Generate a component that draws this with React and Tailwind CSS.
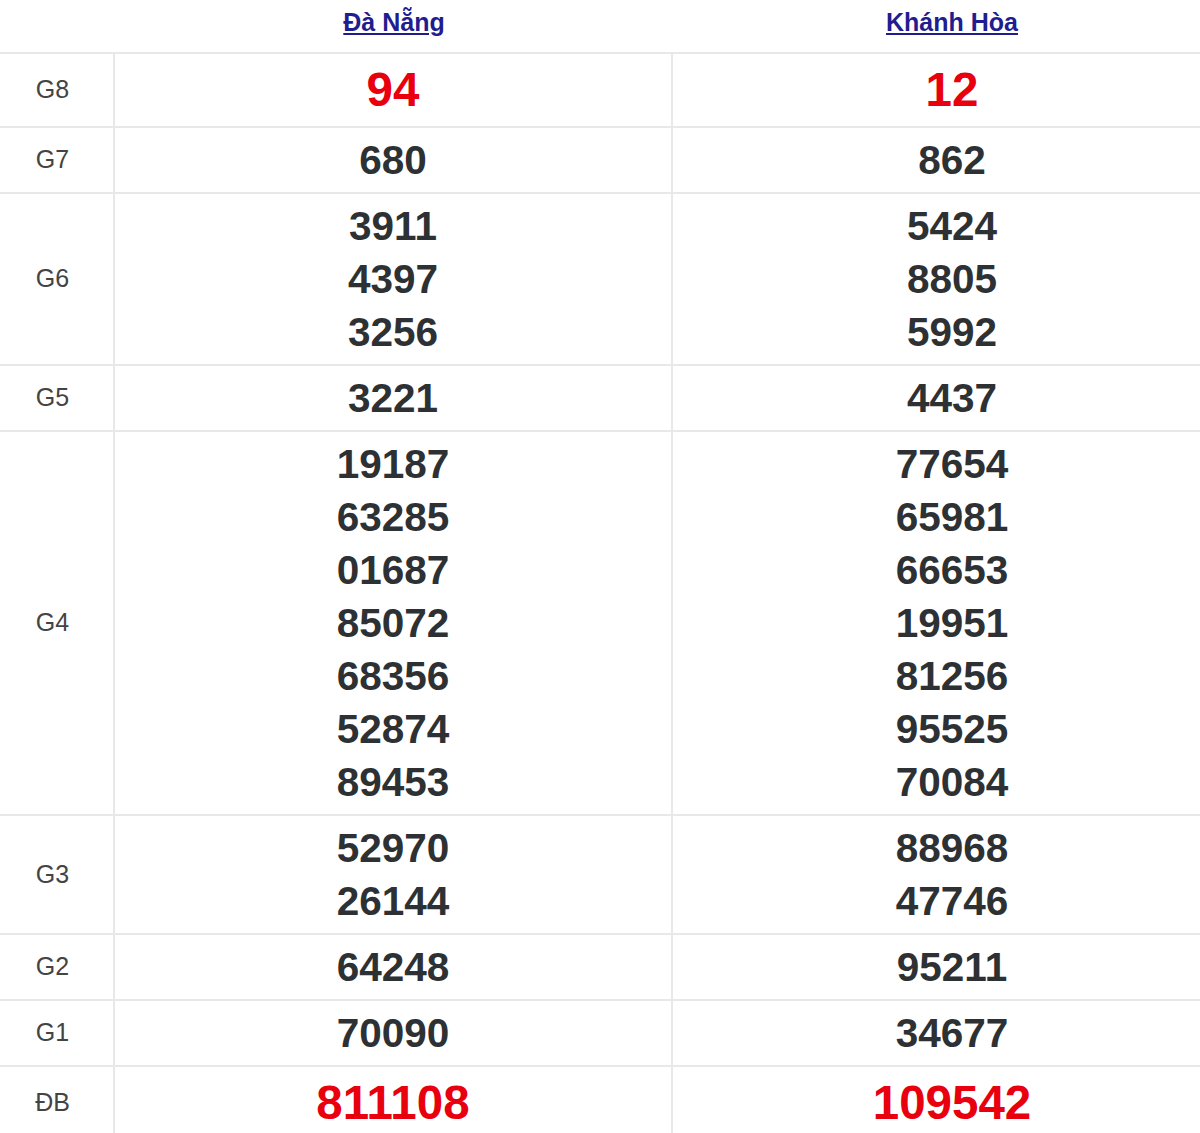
const rows = [
  { label: 'G8', a: ['94'], b: ['12'], big: true },
  { label: 'G7', a: ['680'], b: ['862'] },
  { label: 'G6', a: ['3911', '4397', '3256'], b: ['5424', '8805', '5992'] },
  { label: 'G5', a: ['3221'], b: ['4437'] },
  {
    label: 'G4',
    a: ['19187', '63285', '01687', '85072', '68356', '52874', '89453'],
    b: ['77654', '65981', '66653', '19951', '81256', '95525', '70084'],
  },
  { label: 'G3', a: ['52970', '26144'], b: ['88968', '47746'] },
  { label: 'G2', a: ['64248'], b: ['95211'] },
  { label: 'G1', a: ['70090'], b: ['34677'] },
  { label: 'ĐB', a: ['811108'], b: ['109542'], big: true },
];

const Cell = ({ nums, big, last }) => (
  <div
    className={`w-[558px] shrink-0 flex flex-col items-center justify-center ${last ? '' : 'border-r-2 border-[#e8e8e8]'} ${big ? 'py-[6px]' : 'py-[5.5px]'}`}
  >
    {nums.map((n, i) => (
      <p
        key={i}
        className={
          big
            ? 'text-[47.5px] leading-[60px] font-bold text-[#e8000f]'
            : 'text-[40.5px] leading-[53px] font-bold text-[#2e3133]'
        }
      >
        {n}
      </p>
    ))}
  </div>
);

const App = () => {
  return (
    <div className="w-[1200px] overflow-hidden bg-white font-['Liberation_Sans',Arial,sans-serif]">
      {/* province header */}
      <div className="flex w-[1231px] h-[54px] border-b-2 border-[#e8e8e8]">
        <div className="w-[115px] shrink-0" />
        <div className="w-[558px] shrink-0 flex justify-center pt-[6px]">
          <a href="#" className="text-[25px] leading-[32px] font-bold text-[#1f1d8f] underline">Đà Nẵng</a>
        </div>
        <div className="w-[558px] shrink-0 flex justify-center pt-[6px]">
          <a href="#" className="text-[25px] leading-[32px] font-bold text-[#1f1d8f] underline">Khánh Hòa</a>
        </div>
      </div>

      {/* prize rows */}
      {rows.map((r) => (
        <div key={r.label} className="flex w-[1231px] border-b-2 border-[#e8e8e8]">
          <div className="w-[115px] shrink-0 flex items-center justify-center pr-[8px] border-r-2 border-[#e8e8e8] text-[25px] text-[#444]">
            {r.label}
          </div>
          <Cell nums={r.a} big={r.big} />
          <Cell nums={r.b} big={r.big} last />
        </div>
      ))}
    </div>
  );
};

export default App;
